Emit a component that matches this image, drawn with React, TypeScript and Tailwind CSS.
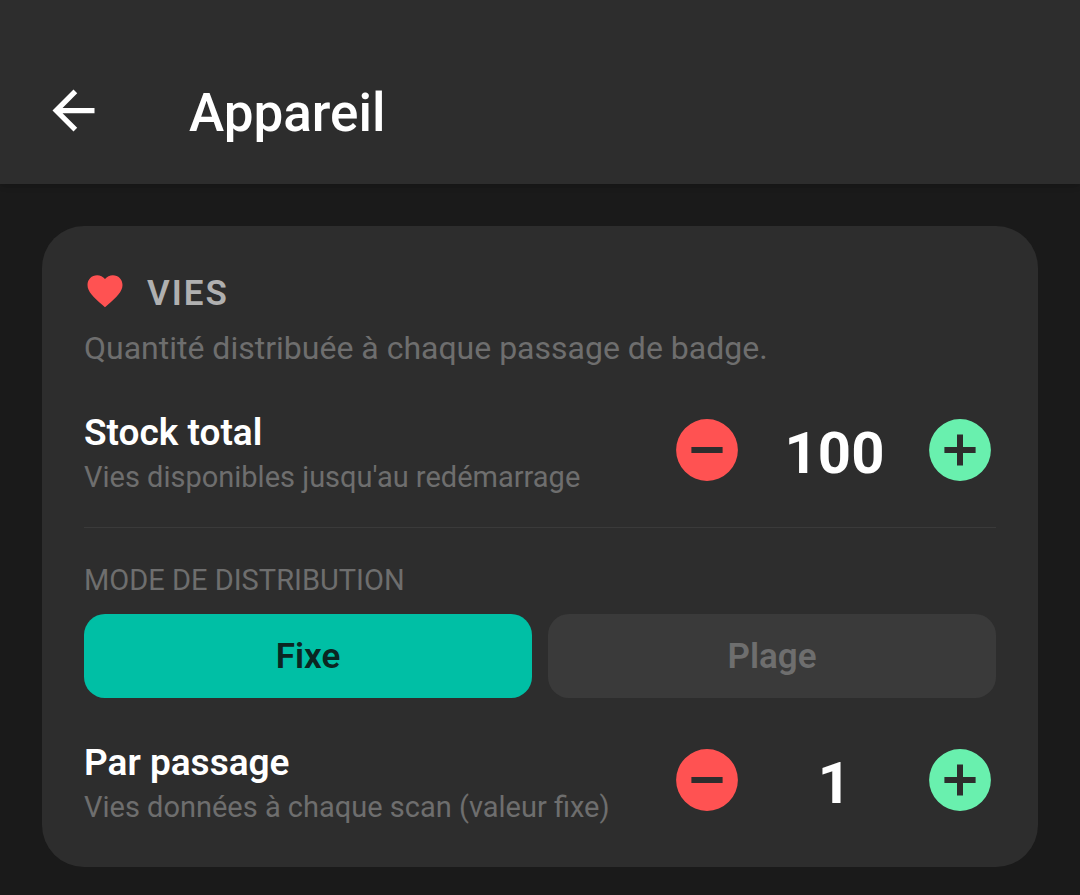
import { useState } from "react";

type StepperProps = { label: string; hint: string; value: number; onChange: (v: number) => void };

function StepButton({ kind, label, onClick }: { kind: "minus" | "plus"; label: string; onClick: () => void }) {
  return (
    <button type="button" aria-label={label} onClick={onClick} className="size-18">
      <svg viewBox="0 0 24 24" className={kind === "minus" ? "size-18 text-[#ff5252]" : "size-18 text-[#69f0ae]"} fill="currentColor">
        {kind === "minus" ? (
          <path d="M12 1.7a10.3 10.3 0 1 0 0 20.6 10.3 10.3 0 1 0 0-20.6zm5.2 11.3H6.8v-2h10.4z" />
        ) : (
          <path d="M12 1.7a10.3 10.3 0 1 0 0 20.6 10.3 10.3 0 1 0 0-20.6zm5.2 11.3H13v4.2h-2V13H6.8v-2H11V6.8h2V11h4.2z" />
        )}
      </svg>
    </button>
  );
}

function Stepper({ label, hint, value, onChange }: StepperProps) {
  return (
    <div className="flex items-center justify-between">
      <div className="pt-[10px]">
        <h3 className="text-[37px] leading-[44px] font-semibold text-white">{label}</h3>
        <p className="text-[29px] leading-[44px] text-[#6e6e6e]">{hint}</p>
      </div>
      <div className="flex items-center">
        <StepButton kind="minus" label={`Diminuer ${label}`} onClick={() => onChange(Math.max(0, value - 1))} />
        <output className="w-[181px] pt-[6px] pl-[2px] text-center text-[58px] leading-[68px] font-bold text-white">{value}</output>
        <StepButton kind="plus" label={`Augmenter ${label}`} onClick={() => onChange(value + 1)} />
      </div>
    </div>
  );
}

export default function App() {
  const [stock, setStock] = useState(100);
  const [amount, setAmount] = useState(1);
  const [mode, setMode] = useState("Fixe");
  return (
    <div className="min-h-screen bg-[#1a1a1a] font-['Roboto',sans-serif]">
      <header className="flex items-start gap-[84px] bg-[#2d2d2d] px-[42px] pt-[79px] pb-[39px] shadow-md">
        <button type="button" aria-label="Retour">
          <svg viewBox="0 0 24 24" className="size-[63px] text-white" fill="currentColor">
            <path d="M20 11H7.83l5.59-5.59L12 4l-8 8 8 8 1.41-1.41L7.83 13H20v-2z" />
          </svg>
        </button>
        <h1 className="pt-[3px] text-[53px] leading-[63px] font-medium text-white">Appareil</h1>
      </header>
      <main className="px-[42px] pt-[42px] pb-7">
        <section className="rounded-[42px] bg-[#2d2d2d] px-[42px] pt-[42px] pb-[38px]">
          <div className="flex items-center gap-[21px]">
            <svg viewBox="0 0 24 24" className="mb-[2px] size-[42px] text-[#ff5252]" fill="currentColor">
              <path d="M12 21.35l-1.45-1.32C5.4 15.36 2 12.28 2 8.5 2 5.42 4.42 3 7.5 3c1.74 0 3.41.81 4.5 2.09C13.09 3.81 14.76 3 16.5 3 19.58 3 22 5.42 22 8.5c0 3.78-3.4 6.86-8.55 11.54L12 21.35z" />
            </svg>
            <h2 className="pt-[4px] text-[35px] leading-[44px] font-semibold tracking-[2px] text-[#b0b0b0]">VIES</h2>
          </div>
          <p className="mt-2 mb-[29px] text-[32px] leading-[48px] text-[#6e6e6e]">Quantité distribuée à chaque passage de badge.</p>
          <Stepper label="Stock total" hint="Vies disponibles jusqu'au redémarrage" value={stock} onChange={setStock} />
          <hr className="mt-7 mb-[30px] border-[#3a3a3a]" />
          <p className="text-[29px] leading-[44px] text-[#6e6e6e]">MODE DE DISTRIBUTION</p>
          <div className="mt-3 mb-[33px] grid grid-cols-2 gap-4">
            {["Fixe", "Plage"].map((name) => (
              <button
                key={name}
                type="button"
                aria-pressed={mode === name}
                onClick={() => setMode(name)}
                className={
                  mode === name
                    ? "h-21 rounded-[21px] bg-[#00bfa5] pt-[2px] text-[35px] font-semibold text-[#0b2622]"
                    : "h-21 rounded-[21px] bg-[#3a3a3a] pt-[2px] text-[35px] font-semibold text-[#6e6e6e]"
                }
              >
                {name}
              </button>
            ))}
          </div>
          <Stepper label="Par passage" hint="Vies données à chaque scan (valeur fixe)" value={amount} onChange={setAmount} />
        </section>
      </main>
    </div>
  );
}
